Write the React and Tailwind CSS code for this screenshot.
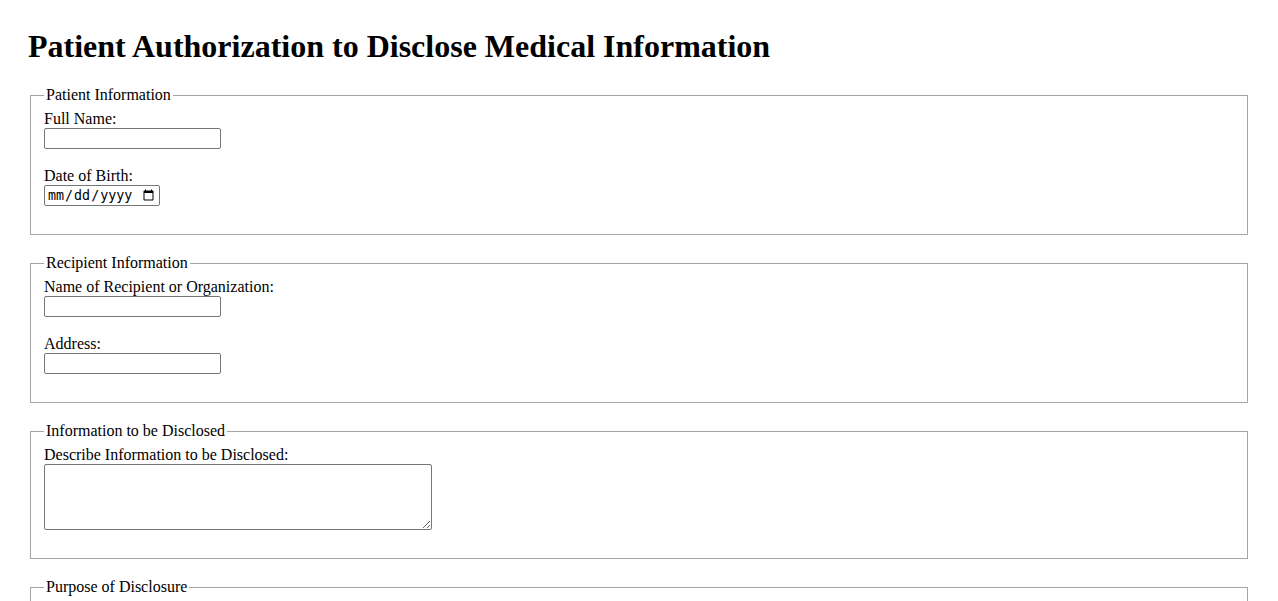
import React from 'react';

const SECTIONS = [
  {
    legend: 'Patient Information',
    fields: [
      { label: 'Full Name:', type: 'text' },
      { label: 'Date of Birth:', type: 'date' },
    ],
  },
  {
    legend: 'Recipient Information',
    fields: [
      { label: 'Name of Recipient or Organization:', type: 'text' },
      { label: 'Address:', type: 'text' },
    ],
  },
  {
    legend: 'Information to be Disclosed',
    fields: [{ label: 'Describe Information to be Disclosed:', type: 'textarea' }],
  },
  {
    legend: 'Purpose of Disclosure',
    fields: [{ label: 'Purpose:', type: 'text' }],
  },
];

function Field({ label, type }) {
  return (
    <div className="flex flex-col items-start">
      <label className="leading-[18px]">{label}</label>
      {type === 'textarea' ? (
        <textarea className="w-[388px] h-[66px] mb-[18px] border border-[#767676] rounded-[2px] bg-white px-[2px] text-[13.33px] font-['DejaVu_Sans_Mono',monospace]" />
      ) : type === 'date' ? (
        <input
          type="date"
          className="w-[116px] h-[21px] mb-[18px] border border-[#767676] rounded-[2px] bg-white px-[2px] text-[13.33px] font-['DejaVu_Sans_Mono',monospace] text-black"
        />
      ) : (
        <input
          type="text"
          className="w-[177px] h-[21px] mb-[18px] border border-[#767676] rounded-[2px] bg-white px-[2px] text-[13.33px] font-['Liberation_Sans',sans-serif]"
        />
      )}
    </div>
  );
}

export default function App() {
  return (
    <div className="min-h-screen bg-white text-black px-[28px] pt-[28px] font-['Liberation_Serif','Times_New_Roman',serif] text-[16px]">
      <h1 className="text-[32px] font-bold leading-[37px] mb-[21px]">
        Patient Authorization to Disclose Medical Information
      </h1>

      <form>
        {SECTIONS.map((s) => (
          <fieldset
            key={s.legend}
            className="mx-[2px] mb-[19px] border border-[#a5a5a5] px-[13px] pt-[6px] pb-[10px]"
          >
            <legend className="px-[2px] leading-[18px]">{s.legend}</legend>
            {s.fields.map((f) => (
              <Field key={f.label} {...f} />
            ))}
          </fieldset>
        ))}
      </form>
    </div>
  );
}
